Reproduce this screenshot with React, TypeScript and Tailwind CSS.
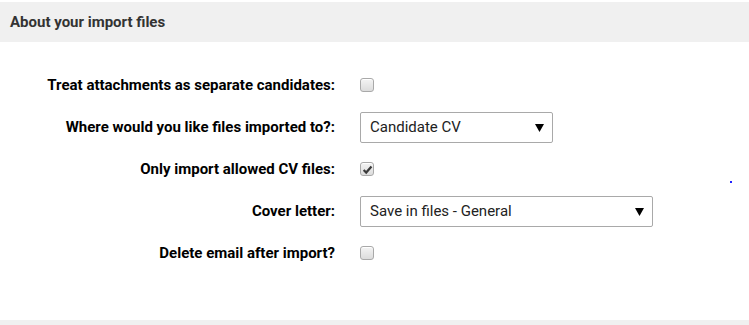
import { useState } from "react";

// Legacy-looking checkbox, drawn so it matches the old browser style
const Box = ({ checked, onToggle }: { checked: boolean; onToggle: () => void }) => (
  <button
    type="button"
    onClick={onToggle}
    className="w-[14px] h-[14px] rounded-[3px] border border-[#a9a9a9] bg-gradient-to-b from-[#f4f4f4] to-[#dcdcdc] shadow-[inset_0_1px_0_#fff] flex items-center justify-center p-0"
  >
    {checked && (
      <svg width="11" height="11" viewBox="0 0 10 10">
        <path d="M1.5 5.5 L3.8 7.8 L8.6 2.2" fill="none" stroke="#3a3a3a" strokeWidth="2" />
      </svg>
    )}
  </button>
);

const Dropdown = ({
  value,
  options,
  width,
  onChange,
}: {
  value: string;
  options: string[];
  width: string;
  onChange: (v: string) => void;
}) => (
  <div className={`relative h-[31px] ${width}`}>
    <select
      value={value}
      onChange={(e) => onChange(e.target.value)}
      className="appearance-none w-full h-full border border-[#a9a9a9] rounded-[2px] bg-white pl-[9px] pr-8 text-[15px] text-[#222] outline-none"
    >
      {options.map((o) => (
        <option key={o}>{o}</option>
      ))}
    </select>
    <svg
      width="9"
      height="8"
      viewBox="0 0 9 8"
      className="pointer-events-none absolute right-[9px] top-[12px]"
    >
      <path d="M0 0 H9 L4.5 8 Z" fill="#000" />
    </svg>
  </div>
);

const Row = ({ label, children }: { label: string; children: React.ReactNode }) => (
  <div className="flex items-center h-[42px]">
    <div className="w-[335px] text-right font-bold text-[15px] text-black">{label}</div>
    <div className="ml-[25px] flex items-center">{children}</div>
  </div>
);

export default function App() {
  const [separate, setSeparate] = useState(false);
  const [dest, setDest] = useState("Candidate CV");
  const [onlyCv, setOnlyCv] = useState(true);
  const [cover, setCover] = useState("Save in files - General");
  const [del, setDel] = useState(false);

  return (
    <div className="relative w-[749px] h-[325px] bg-white font-['Roboto',sans-serif] overflow-hidden">
      <div className="mt-[2px] h-[40px] bg-[#f0f0f0] flex items-center px-[10px]">
        <h2 className="font-bold text-[15px] text-[#333]">About your import files</h2>
      </div>

      <div className="pt-[22px] h-[278px]">
        <Row label="Treat attachments as separate candidates:">
          <Box checked={separate} onToggle={() => setSeparate(!separate)} />
        </Row>
        <Row label="Where would you like files imported to?:">
          <Dropdown
            value={dest}
            options={["Candidate CV", "Candidate files"]}
            width="w-[193px]"
            onChange={setDest}
          />
        </Row>
        <Row label="Only import allowed CV files:">
          <Box checked={onlyCv} onToggle={() => setOnlyCv(!onlyCv)} />
        </Row>
        <Row label="Cover letter:">
          <Dropdown
            value={cover}
            options={["Save in files - General", "Ignore"]}
            width="w-[293px]"
            onChange={setCover}
          />
        </Row>
        <Row label="Delete email after import?">
          <Box checked={del} onToggle={() => setDel(!del)} />
        </Row>
      </div>

      <div className="h-[5px] bg-[#f0f0f0]" />

      {/* stray focus dot seen in the capture */}
      <span className="absolute left-[730px] top-[181px] w-[2px] h-[2px] bg-[#2222ff]" />
    </div>
  );
}
